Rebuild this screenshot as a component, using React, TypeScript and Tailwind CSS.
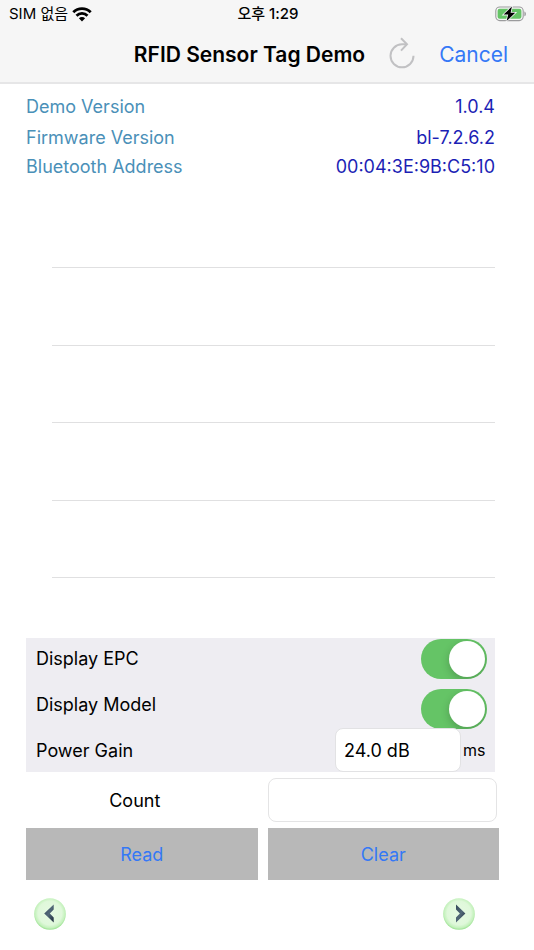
import { useState } from "react";
import { twMerge } from "tailwind-merge";

const info = [
	{ label: "Demo Version", value: "1.0.4", className: "h-8" },
	{ label: "Firmware Version", value: "bl-7.2.6.2", className: "h-[30px]" },
	{ label: "Bluetooth Address", value: "00:04:3E:9B:C5:10", className: "h-7" },
];

const emptyRows = [0, 1, 2, 3, 4];

function WifiIcon() {
	return (
		<svg viewBox="0 0 20 15" className="h-[15px] w-5" aria-hidden="true">
			<g fill="none" stroke="#000" strokeWidth="2.8">
				<path d="M1.3 5.2a12.3 12.3 0 0 1 17.4 0" />
				<path d="M4.5 8.7a7.8 7.8 0 0 1 11 0" />
			</g>
			<path d="M10 14.4 6.9 11.2a4.4 4.4 0 0 1 6.2 0z" />
		</svg>
	);
}

function BatteryIcon() {
	return (
		<svg viewBox="0 0 32 16" className="h-4 w-8" aria-hidden="true">
			<rect
				x="0.8"
				y="1"
				width="27.4"
				height="13.6"
				rx="4"
				fill="none"
				stroke="#9b9b9d"
				strokeWidth="1.1"
			/>
			<rect x="2.6" y="2.8" width="23.8" height="10" rx="2" fill="#65c466" />
			<path d="M29.4 5.4c2 .6 2 4.2 0 4.8z" fill="#9b9b9d" />
			<path
				d="M16.9.6 8.6 8.6h4.6L11.6 15l8.6-8.2h-4.6z"
				stroke="#f6f6f6"
				strokeWidth="1.6"
				paintOrder="stroke"
			/>
		</svg>
	);
}

function ReloadIcon() {
	return (
		<svg
			viewBox="0 0 26 32"
			className="h-8 w-[26px]"
			fill="none"
			stroke="#c1c1c3"
			strokeWidth="2"
			aria-hidden="true"
		>
			<path d="M17.5 7.3H13A11.5 11.5 0 1 0 24.5 18.8" />
			<path d="M12 1.2 18 7.3 12 13.6" />
		</svg>
	);
}

function ArrowIcon({ direction }: { direction: "left" | "right" }) {
	const id = `ball-${direction}`;

	return (
		<svg viewBox="0 0 32 32" className="size-8" aria-hidden="true">
			<defs>
				<radialGradient id={id} cx="0.5" cy="0.47" r="0.54">
					<stop offset="0" stopColor="#e6fae3" />
					<stop offset="0.7" stopColor="#dff8da" />
					<stop offset="0.88" stopColor="#c3f1bb" />
					<stop offset="1" stopColor="#8fdc85" />
				</radialGradient>
				<linearGradient id={`${id}-tip`} x1="0" y1="0" x2="1" y2="1">
					<stop offset="0" stopColor="#34495a" />
					<stop offset="0.5" stopColor="#526878" />
					<stop offset="1" stopColor="#1b2b3a" />
				</linearGradient>
			</defs>
			<circle cx="16" cy="16" r="15.8" fill={`url(#${id})`} />
			<path
				d={
					direction === "left"
						? "M19.7 6.6v5L15.8 15.6l3.9 4v5L10.2 15.6z"
						: "M13 6.6v5l3.9 4-3.9 4v5L22.4 15.6z"
				}
				fill={`url(#${id}-tip)`}
			/>
		</svg>
	);
}

function Switch({ id }: { id: string }) {
	return (
		<input
			id={id}
			type="checkbox"
			role="switch"
			defaultChecked
			className="block h-10 w-[66px] appearance-none overflow-hidden rounded-full bg-[#e9e9eb] p-0.5 before:block before:size-9 before:rounded-full before:bg-white before:shadow-[0_3px_8px_rgba(0,0,0,0.2)] checked:bg-[#65c466] checked:before:ml-auto"
		/>
	);
}

export default function App() {
	const [count, setCount] = useState("");
	const [gain, setGain] = useState("24.0 dB");

	return (
		<div className="min-h-screen bg-white font-['Inter','Noto_Sans_CJK_KR',sans-serif] text-lg/6 text-black">
			<header className="border-b-2 border-[#e6e6e7] bg-[#f6f6f6]">
				<div className="grid h-7 grid-cols-3 items-center pr-[7px] pl-[9px] text-[15px]/5">
					<div className="flex items-center gap-1">
						<span>SIM 없음</span>
						<WifiIcon />
					</div>
					<span className="text-center font-medium">오후 1:29</span>
					<div className="flex justify-end">
						<BatteryIcon />
					</div>
				</div>
				<div className="flex h-[54px] items-center justify-end pr-[26px]">
					<h1 className="text-[21px]/7 font-semibold">RFID Sensor Tag Demo</h1>
					<button type="button" aria-label="Reload" className="mr-6 ml-6 pb-1">
						<ReloadIcon />
					</button>
					<button type="button" className="text-[21px]/7 text-[#3478f6]">
						Cancel
					</button>
				</div>
			</header>

			<main className="pr-[35px] pl-[26px]">
				<dl className="mr-1 pt-[7px]">
					{info.map((item) => (
						<div
							key={item.label}
							className={twMerge("flex items-center justify-between", item.className)}
						>
							<dt className="text-[#4a90b8]">{item.label}</dt>
							<dd className="text-[#1c1fb5]">{item.value}</dd>
						</div>
					))}
				</dl>

				<ul className="mt-2.5 mr-1 ml-[26px] grid h-[387px] grid-rows-5">
					{emptyRows.map((row) => (
						<li key={row} className="border-b border-[#e0e0e1]" />
					))}
				</ul>

				<section className="mt-[60px] mr-1 flex justify-between bg-[#eeedf2] pl-2.5">
					<div className="flex flex-col gap-[22px] pt-[9px]">
						<label htmlFor="epc">Display EPC</label>
						<label htmlFor="model">Display Model</label>
						<label htmlFor="gain">Power Gain</label>
					</div>
					<div className="flex flex-col items-end pt-px pr-2">
						<Switch id="epc" />
						<div className="mt-2.5">
							<Switch id="model" />
						</div>
						<div className="relative -mt-px flex items-center gap-0.5">
							<input
								id="gain"
								value={gain}
								onChange={(e) => setGain(e.target.value)}
								className="h-11 w-[126px] rounded-lg border border-[#e2e2e4] bg-white px-2"
							/>
							<span className="w-6 text-base">ms</span>
						</div>
					</div>
				</section>

				<div className="mt-1.5 grid grid-cols-2 items-center gap-x-2.5 gap-y-1.5">
					<label htmlFor="count" className="pt-0.5 pr-3.5 text-center">
						Count
					</label>
					<div className="pr-0.5">
						<input
							id="count"
							value={count}
							onChange={(e) => setCount(e.target.value)}
							className="block h-11 w-full rounded-lg border border-[#e4e4e5] bg-white px-2"
						/>
					</div>
					<button type="button" className="h-[52px] bg-[#b8b8b8] pt-0.5 text-[#3478f6]">
						Read
					</button>
					<button
						type="button"
						onClick={() => setCount("")}
						className="h-[52px] bg-[#b8b8b8] pt-0.5 text-[#3478f6]"
					>
						Clear
					</button>
				</div>

				<nav className="flex justify-between pt-[18px] pr-6 pb-5 pl-2">
					<button type="button" aria-label="Previous">
						<ArrowIcon direction="left" />
					</button>
					<button type="button" aria-label="Next">
						<ArrowIcon direction="right" />
					</button>
				</nav>
			</main>
		</div>
	);
}
